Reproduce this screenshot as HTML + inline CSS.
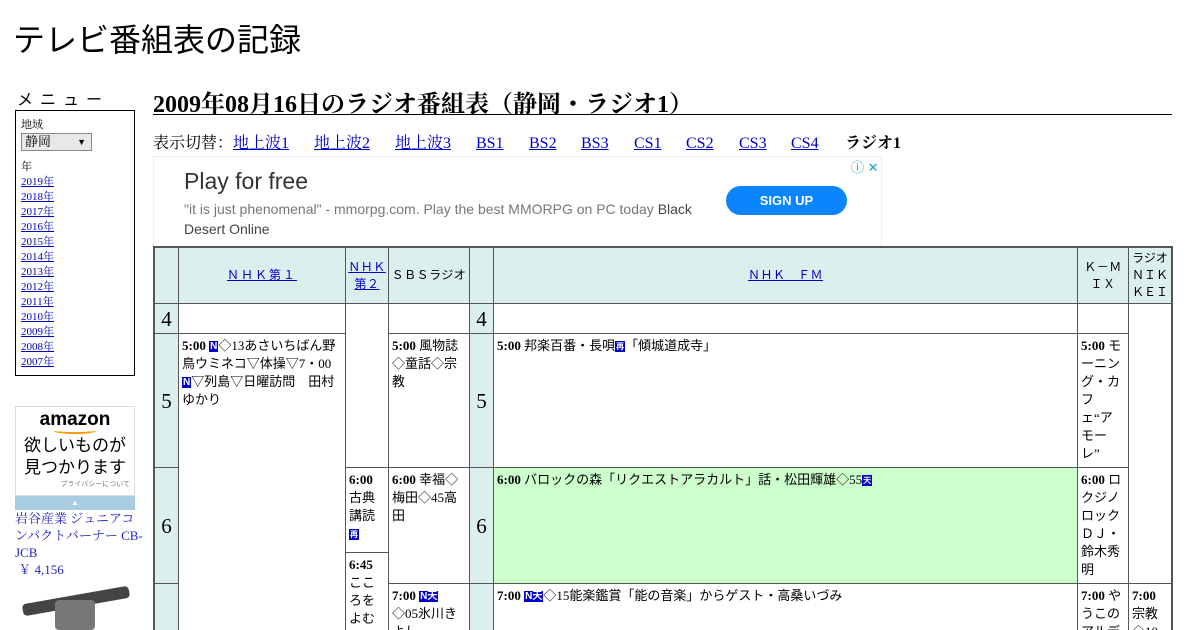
<!DOCTYPE html>
<html><head><meta charset="utf-8"><style>
html,body{margin:0;width:1200px;height:630px;overflow:hidden}
body{background:#fff;font-family:"Liberation Serif","Noto Serif CJK SC","Noto Sans CJK JP",serif;color:#000;position:relative}
.a{position:absolute}
a{color:#00c;text-decoration:underline}
h1{position:absolute;left:13px;top:15px;margin:0;font-size:32px;font-weight:normal;font-family:"Liberation Sans","Noto Sans CJK JP",sans-serif}
.menu{left:15px;top:110px;width:118px;height:264px;border:1px solid #000;font-size:11px}
.menu .yr{display:block;line-height:15px}
.g{background:#555;left:153px;top:246px;width:1020px;height:384px;overflow:hidden}
.c{position:absolute;background:#fff;box-sizing:border-box;padding:3px 3px;font-size:13px;line-height:18px;overflow:hidden;font-family:"Liberation Serif","Noto Sans CJK JP",serif}
.h{background:#dcefef}
.hr{font-size:21px;display:flex;align-items:center;justify-content:center}
.th{display:flex;align-items:center;justify-content:center;text-align:center;font-family:"Liberation Sans","Noto Sans CJK JP",sans-serif;font-size:12px;letter-spacing:0.5px;line-height:17px}
b{font-weight:bold}
.n{display:inline-block;background:#00c;color:#fff;font-size:10px;line-height:11px;height:11px;padding:0 1px;font-family:"Liberation Sans",sans-serif;font-weight:bold;vertical-align:1px}
.gr{background:#ccffcc}
.nav{position:absolute;top:134px;font-size:16px;line-height:20px;height:20px;white-space:nowrap}
</style></head><body>
<h1>テレビ番組表の記録</h1>
<div class="a" style="left:17px;top:86px;font-size:16px;letter-spacing:7px;font-family:'Liberation Sans','Noto Sans CJK JP',sans-serif">メニュー</div>
<div class="a menu">
 <div style="position:absolute;left:5px;top:5px">地域</div>
 <div style="position:absolute;left:5px;top:22px;width:66px;height:16px;border:1px solid #888;background:#e8e8e8;font-size:13px;line-height:16px;padding-left:3px">静岡<span style="position:absolute;right:5px;font-size:9px">▼</span></div>
 <div style="position:absolute;left:5px;top:49px;line-height:15px">年<br>
 <a class="yr">2019年</a><a class="yr">2018年</a><a class="yr">2017年</a><a class="yr">2016年</a><a class="yr">2015年</a><a class="yr">2014年</a><a class="yr">2013年</a><a class="yr">2012年</a><a class="yr">2011年</a><a class="yr">2010年</a><a class="yr">2009年</a><a class="yr">2008年</a><a class="yr">2007年</a></div>
</div>
<div class="a" style="left:15px;top:406px;width:118px;height:88px;border:1px solid #ddd;text-align:center;font-family:'Liberation Sans','Noto Sans CJK JP',sans-serif">
 <div style="font-size:19px;font-weight:bold;margin-top:3px;line-height:20px">amazon</div>
 <div style="width:44px;height:5px;border-bottom:2px solid #f90;border-radius:0 0 50% 50%;margin:-3px auto 1px"></div>
 <div style="font-size:17px;line-height:22px">欲しいものが<br>見つかります</div>
 <div style="font-size:7px;color:#777;text-align:right;padding-right:4px">プライバシーについて</div>
</div>
<div class="a" style="left:15px;top:496px;width:120px;height:14px;background:#a8cde0;color:#fff;text-align:center;font-size:8px;line-height:14px">▲</div>
<div class="a" style="left:15px;top:510px;width:135px;font-size:13px;line-height:17px;color:#2222cc;white-space:nowrap">岩谷産業 ジュニアコ<br>ンパクトバーナー CB-<br>JCB<br>&nbsp;￥ 4,156</div>
<div class="a" style="left:22px;top:595px;width:108px;height:12px;background:#444;transform:rotate(-10deg);border-radius:4px"></div>
<div class="a" style="left:55px;top:600px;width:40px;height:30px;background:#777;border-radius:4px"></div>

<div class="a" style="left:153px;top:84px;width:1019px;border-bottom:1px solid #000;height:30px;font-size:24px;font-weight:bold;white-space:nowrap">2009年08月16日のラジオ番組表（静岡・ラジオ1）</div>
<div class="nav" style="left:153px">表示切替：</div>
<a class="nav" style="left:233px">地上波1</a>
<a class="nav" style="left:314px">地上波2</a>
<a class="nav" style="left:395px">地上波3</a>
<a class="nav" style="left:476px">BS1</a>
<a class="nav" style="left:529px">BS2</a>
<a class="nav" style="left:581px">BS3</a>
<a class="nav" style="left:634px">CS1</a>
<a class="nav" style="left:686px">CS2</a>
<a class="nav" style="left:739px">CS3</a>
<a class="nav" style="left:791px">CS4</a>
<b class="nav" style="left:845px">ラジオ1</b>

<div class="a" style="left:153px;top:156px;width:727px;height:89px;border:1px solid #eee;font-family:'Liberation Sans',sans-serif">
 <div class="a" style="left:30px;top:11px;font-size:23px;color:#333">Play for free</div>
 <div class="a" style="left:30px;top:42px;font-size:14px;color:#777;width:520px;line-height:20px">"it is just phenomenal" - mmorpg.com. Play the best MMORPG on PC today <span style="color:#444">Black Desert Online</span></div>
 <div class="a" style="left:572px;top:29px;width:121px;height:29px;border-radius:15px;background:#0a84ff;color:#fff;font-size:13px;font-weight:bold;text-align:center;line-height:29px">SIGN UP</div>
 <div class="a" style="left:697px;top:0px;font-size:13px;color:#1a9ccf">ⓘ ✕</div>
</div>

<div class="a g">
 <div class="c h" style="left:2px;top:2px;width:23px;height:55px"></div>
 <div class="c h th" style="left:26px;top:2px;width:166px;height:55px;letter-spacing:2px"><a>ＮＨＫ第１</a></div>
 <div class="c h th" style="left:193px;top:2px;width:42px;height:55px;padding:0"><a>ＮＨＫ<br>第２</a></div>
 <div class="c h th" style="left:236px;top:2px;width:80px;height:55px;padding:0;white-space:nowrap">ＳＢＳラジオ</div>
 <div class="c h" style="left:317px;top:2px;width:23px;height:55px"></div>
 <div class="c h th" style="left:341px;top:2px;width:583px;height:55px"><a>ＮＨＫ　ＦＭ</a></div>
 <div class="c h th" style="left:925px;top:2px;width:50px;height:55px;padding:0">Ｋ－Ｍ<br>ＩＸ</div>
 <div class="c h th" style="left:976px;top:2px;width:42px;height:55px;padding:0;letter-spacing:0">ラジオ<br>ＮＩＫ<br>ＫＥＩ</div>
 <div class="c h hr" style="left:2px;top:58px;width:23px;height:29px">4</div>
 <div class="c h hr" style="left:2px;top:88px;width:23px;height:133px">5</div>
 <div class="c h hr" style="left:2px;top:222px;width:23px;height:115px">6</div>
 <div class="c h hr" style="left:2px;top:338px;width:23px;height:80px"></div>
 <div class="c" style="left:26px;top:58px;width:166px;height:29px"></div>
 <div class="c" style="left:26px;top:88px;width:166px;height:330px;white-space:nowrap"><b>5:00</b> <span class="n">N</span>◇13あさいちばん野<br>鳥ウミネコ▽体操▽7・00<br><span class="n">N</span>▽列島▽日曜訪問　田村<br>ゆかり</div>
 <div class="c" style="left:193px;top:58px;width:42px;height:163px"></div>
 <div class="c" style="left:193px;top:222px;width:42px;height:84px"><b>6:00</b><br>古典<br>講読<br><span class="n" style="font-size:8px">再</span></div>
 <div class="c" style="left:193px;top:307px;width:42px;height:110px"><b>6:45</b><br>ここ<br>ろを<br>よむ</div>
 <div class="c" style="left:236px;top:58px;width:80px;height:29px"></div>
 <div class="c" style="left:236px;top:88px;width:80px;height:133px"><b>5:00</b> 風物誌<br>◇童話◇宗<br>教</div>
 <div class="c" style="left:236px;top:222px;width:80px;height:115px"><b>6:00</b> 幸福◇<br>梅田◇45高<br>田</div>
 <div class="c" style="left:236px;top:338px;width:80px;height:80px"><b>7:00</b> <span class="n">N天</span><br>◇05氷川き<br>よし</div>
 <div class="c h hr" style="left:317px;top:58px;width:23px;height:29px">4</div>
 <div class="c h hr" style="left:317px;top:88px;width:23px;height:133px">5</div>
 <div class="c h hr" style="left:317px;top:222px;width:23px;height:115px">6</div>
 <div class="c h hr" style="left:317px;top:338px;width:23px;height:80px"></div>
 <div class="c" style="left:341px;top:58px;width:583px;height:29px"></div>
 <div class="c" style="left:341px;top:88px;width:583px;height:133px"><b>5:00</b> 邦楽百番・長唄<span class="n" style="font-size:8px">再</span>「傾城道成寺」</div>
 <div class="c gr" style="left:341px;top:222px;width:583px;height:115px"><b>6:00</b> バロックの森「リクエストアラカルト」話・松田輝雄◇55<span class="n" style="font-size:8px">天</span></div>
 <div class="c" style="left:341px;top:338px;width:583px;height:80px"><b>7:00</b> <span class="n">N天</span>◇15能楽鑑賞「能の音楽」からゲスト・高桑いづみ</div>
 <div class="c" style="left:925px;top:58px;width:50px;height:29px"></div>
 <div class="c" style="left:925px;top:88px;width:50px;height:133px"><b>5:00</b> モ<br>ーニン<br>グ・カ<br>フ<br>ェ“ア<br>モー<br>レ”</div>
 <div class="c" style="left:925px;top:222px;width:50px;height:115px"><b>6:00</b> ロ<br>クジノ<br>ロック<br>ＤＪ・<br>鈴木秀<br>明</div>
 <div class="c" style="left:925px;top:338px;width:50px;height:80px"><b>7:00</b> や<br>うこの<br>アルデ</div>
 <div class="c" style="left:976px;top:58px;width:42px;height:279px"></div>
 <div class="c" style="left:976px;top:338px;width:42px;height:80px"><b>7:00</b><br>宗教<br>◇10</div>
</div>
</body></html>
